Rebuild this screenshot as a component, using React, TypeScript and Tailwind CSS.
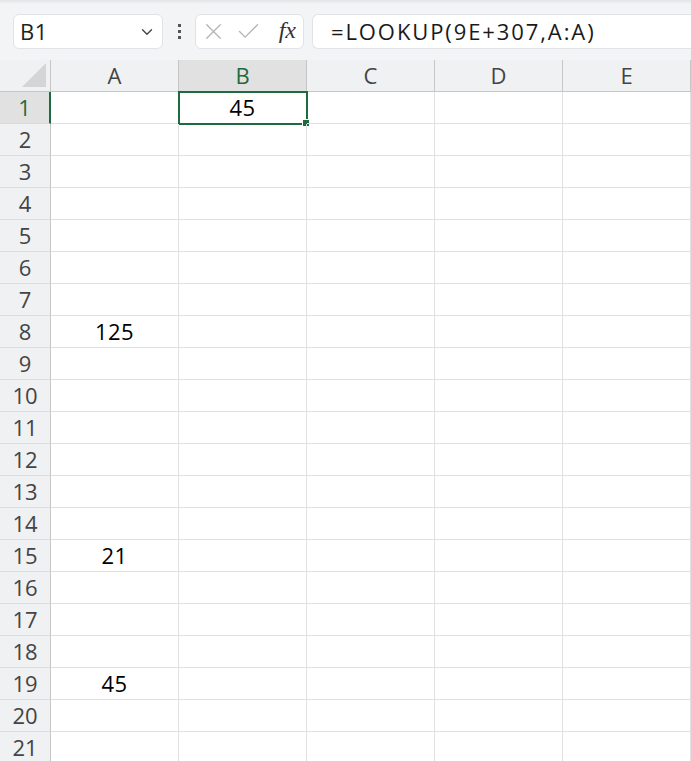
import { ChevronDown, X, Check } from 'lucide-react'

const cols = ['A', 'B', 'C', 'D', 'E']
const values: Record<number, string> = { 8: '125', 15: '21', 19: '45' }
const font = { fontFamily: '"Open Sans", "Noto Sans", sans-serif' }

function Toolbar() {
  return (
    <div className="h-[60px] bg-[#f3f4f6] relative">
      <div className="h-[4px] bg-gradient-to-b from-[#e2e4e6] to-[#f3f4f6]" />
      <div className="flex items-center pl-[13px] pt-[10px] gap-0">
        <div className="w-[150px] h-[35px] bg-white border border-[#e1e3e6] rounded-[6px] flex items-center justify-between pl-[6px] pr-[6px]">
          <span className="text-[22px] text-[#222] tracking-[0.5px]">B1</span>
          <ChevronDown size={18} strokeWidth={1.8} className="text-[#444]" />
        </div>
        <div className="w-[32px] flex flex-col items-center gap-[3px]">
          <span className="w-[3px] h-[3px] bg-[#555]" />
          <span className="w-[3px] h-[3px] bg-[#555]" />
          <span className="w-[3px] h-[3px] bg-[#555]" />
        </div>
        <div className="w-[109px] h-[35px] bg-white border border-[#e1e3e6] rounded-[6px] flex items-center pl-[4px] pr-[7px]">
          <X size={27} strokeWidth={1.2} className="text-[#b4b4b4]" />
          <Check size={27} strokeWidth={1.2} className="text-[#b4b4b4] ml-[8px]" />
          <span
            className="ml-auto text-[24px] italic text-[#333] leading-none pb-[3px]"
            style={{ fontFamily: '"Liberation Serif", serif' }}
          >
            fx
          </span>
        </div>
        <div className="ml-[8px] flex-1 h-[35px] bg-white border border-[#e1e3e6] border-r-0 rounded-l-[6px] flex items-center pl-[18px]">
          <span className="text-[22px] text-[#1a1a1a] tracking-[1.9px]">=LOOKUP(9E+307,A:A)</span>
        </div>
      </div>
    </div>
  )
}

function Sheet() {
  const rows = Array.from({ length: 21 }, (_, i) => i + 1)
  return (
    <div className="grid grid-cols-[51px_repeat(5,128px)_1fr] auto-rows-[32px]">
      <div className="bg-[#f0f1f2] border-b border-r border-[#c6c6c6] relative">
        <div
          className="absolute right-[4px] bottom-[4px] w-[24px] h-[24px] bg-[#d4d5d6]"
          style={{ clipPath: 'polygon(100% 0, 100% 100%, 0 100%)' }}
        />
      </div>
      {cols.map((c) => (
        <div
          key={c}
          className={
            c === 'B'
              ? 'bg-[#e1e1e1] border-b border-r border-[#c6c6c6] flex items-center justify-center text-[22px] text-[#1e6b3f]'
              : 'bg-[#f0f1f2] border-b border-r border-[#c6c6c6] flex items-center justify-center text-[22px] text-[#444]'
          }
        >
          {c}
        </div>
      ))}
      <div className="bg-[#f0f1f2] border-b border-[#c6c6c6]" />
      {rows.map((r) => (
        <Row key={r} r={r} />
      ))}
    </div>
  )
}

function Row({ r }: { r: number }) {
  return (
    <>
      <div
        className={
          r === 1
            ? 'bg-[#e1e1e1] border-b border-r-2 border-b-[#d9d9d9] border-r-[#1e6b3f] flex items-center justify-center text-[22px] text-[#1e6b3f]'
            : 'bg-[#f0f1f2] border-b border-r border-b-[#dcdcdc] border-r-[#c6c6c6] flex items-center justify-center text-[22px] text-[#444]'
        }
      >
        {r}
      </div>
      {cols.map((c) => (
        <div
          key={c}
          className="relative border-b border-r border-[#e1e1e1] flex items-center justify-center text-[22px] text-black tracking-[0.5px]"
        >
          {c === 'A' ? values[r] : null}
          {c === 'B' && r === 1 ? (
            <>
              <span>45</span>
              <div className="absolute -left-[1px] -top-[1px] w-[130px] h-[34px] border-2 border-[#1e6b3f]" />
              <div className="absolute right-[-4px] bottom-[-4px] w-[6px] h-[6px] bg-[#1e6b3f] border border-white box-content" />
            </>
          ) : null}
        </div>
      ))}
      <div className="border-b border-[#e1e1e1]" />
    </>
  )
}

export default function App() {
  return (
    <div className="w-[691px] h-[761px] overflow-hidden bg-white" style={font}>
      <Toolbar />
      <Sheet />
    </div>
  )
}
